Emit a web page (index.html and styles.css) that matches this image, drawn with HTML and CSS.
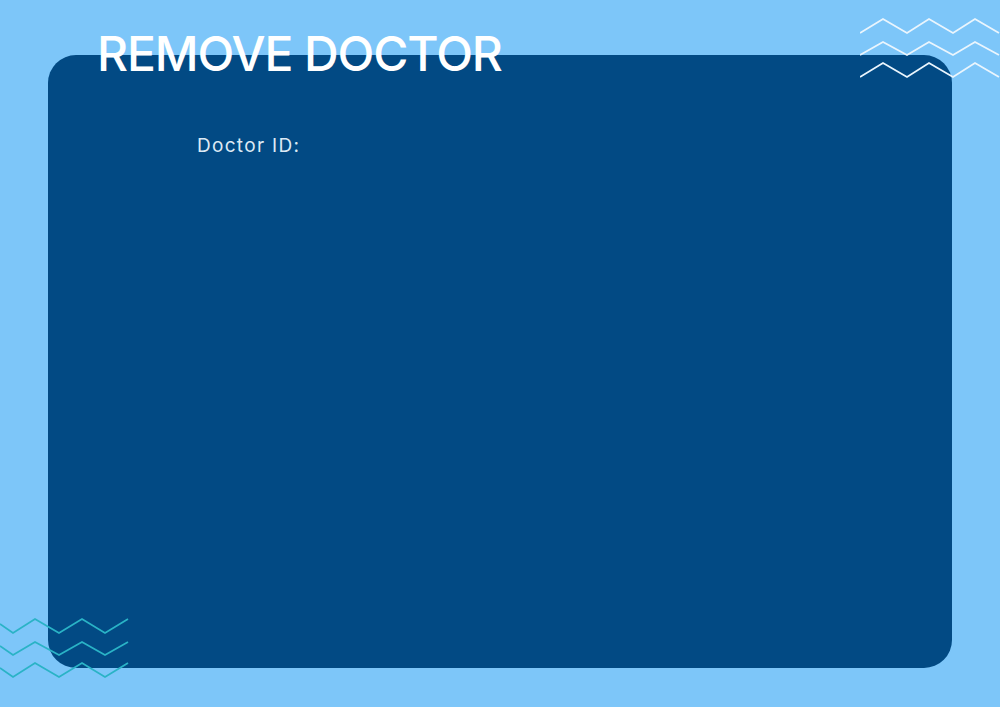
FILE: index.html
```html
<!DOCTYPE html>
<html>
<head>
<meta charset="utf-8">
<title>Remove Doctor</title>
<link rel="stylesheet" href="styles.css">
</head>
<body>
<div class="page">
  <main class="card">
    <form class="form">
      <label class="field-label">Doctor ID:</label>
    </form>
  </main>
  <h1 class="title">REMOVE DOCTOR</h1>
  <svg class="zig zig-top" width="140" height="80" viewBox="860 0 140 80">
    <g fill="none" stroke="#eaf5fd" stroke-width="1.8" stroke-linejoin="miter">
      <polyline points="860,33 883,19 907,33 929,19 953,33 975,19 999,33"/>
      <polyline points="860,55 883,42 907,55 929,42 953,55 975,42 999,55"/>
      <polyline points="860,77 883,63 907,77 929,63 953,77 975,63 999,77"/>
    </g>
  </svg>
  <svg class="zig zig-bottom" width="140" height="90" viewBox="0 600 140 90">
    <g fill="none" stroke="#2ab3c6" stroke-width="1.8">
      <polyline points="0,624 13,633 35,619 59,633 82,619 105,633 128,619"/>
      <polyline points="0,646 13,655 35,642 59,655 82,642 105,655 128,642"/>
      <polyline points="0,668 13,677 35,663 59,677 82,663 105,677 128,663"/>
    </g>
  </svg>
</div>
</body>
</html>
```
FILE: styles.css
```css
html, body {
  margin: 0;
  padding: 0;
}
body {
  width: 1000px;
  height: 707px;
  overflow: hidden;
  background: #7dc6f9;
  font-family: "Inter", "Open Sans", "Liberation Sans", sans-serif;
}
.page {
  position: relative;
  width: 1000px;
  height: 707px;
  padding: 55px 48px 0;
  box-sizing: border-box;
}
.card {
  height: 613px;
  background: #024a84;
  border-radius: 28px;
  box-sizing: border-box;
  padding: 77px 0 0 149px;
}
.form {
  margin: 0;
}
.field-label {
  display: block;
  color: #dde9f4;
  font-size: 19px;
  line-height: 28px;
  font-weight: 400;
  letter-spacing: 1.3px;
}
.title {
  position: absolute;
  left: 97px;
  top: 24px;
  margin: 0;
  color: #ffffff;
  font-size: 48px;
  line-height: 60px;
  font-weight: 500;
  letter-spacing: -1.1px;
}
.zig {
  position: absolute;
  display: block;
}
.zig-top {
  left: 860px;
  top: 0;
}
.zig-bottom {
  left: 0;
  top: 600px;
}
```
